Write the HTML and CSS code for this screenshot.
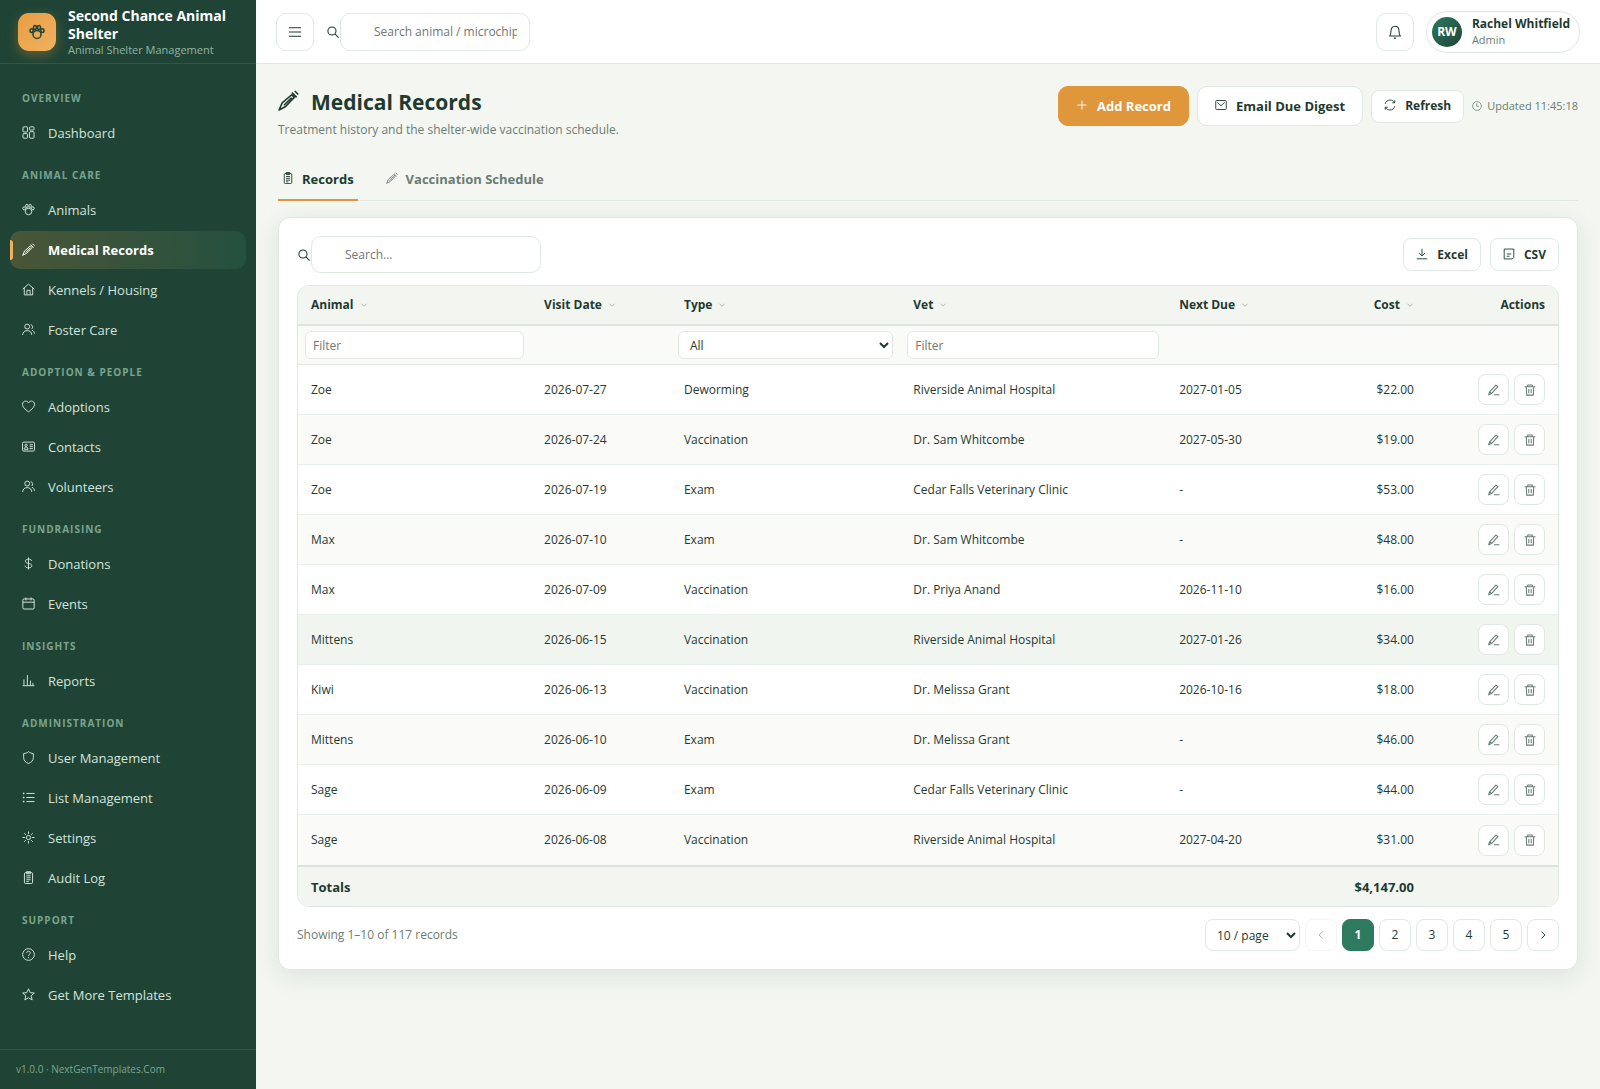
FILE: index.html
```html
<!DOCTYPE html>
<html lang="en">
<head>
    <meta charset="utf-8">
    <meta name="viewport" content="width=device-width, initial-scale=1">
    <title>Medical Records</title>
    <link rel="stylesheet" href="styles.css">
</head>
<body>

<!-- Icon sprite -->
<svg class="sprite" aria-hidden="true">
    <symbol id="i-paw" viewBox="0 0 16 16"><circle cx="8" cy="10.4" r="4"/><ellipse cx="2.6" cy="6.6" rx="1.6" ry="1.9"/><ellipse cx="6" cy="3.6" rx="1.5" ry="2"/><ellipse cx="10" cy="3.6" rx="1.5" ry="2"/><ellipse cx="13.4" cy="6.6" rx="1.6" ry="1.9"/></symbol>
    <symbol id="i-dashboard" viewBox="0 0 16 16"><rect x="1.2" y="1" width="5.6" height="6.4" rx="1"/><rect x="1.2" y="9.4" width="5.6" height="5.6" rx="1"/><rect x="9.2" y="1" width="5.6" height="4" rx="1"/><rect x="9.2" y="7" width="5.6" height="8" rx="1"/></symbol>
    <symbol id="i-syringe" viewBox="0 0 16 16"><path d="M.8 15.2l2.4-5.4L10.4 3.6l2 2-6.600 7zM4.600 11.600l5.800-5.800M10.600 2l3.600 3.600M12.800.8l2.600 2.600"/></symbol>
    <symbol id="i-home" viewBox="0 0 16 16"><path d="M.8 7.6L8 1.4l7.2 6.2M2.8 6v8.6h10.4V6M6 14.4V9h4v5.4"/></symbol>
    <symbol id="i-users" viewBox="0 0 16 16"><circle cx="6.4" cy="4.4" r="3"/><path d="M.8 14.6c.4-3.6 2.4-5.2 5.6-5.2s5.2 1.6 5.6 5.2M10.8 2a3 3 0 0 1 1 5.4M12.2 9c2 .4 3 2 3 4.4"/></symbol>
    <symbol id="i-heart" viewBox="0 0 16 16"><path d="M8 14.6C3.600 11.400.6 8.600.6 5.200.6 3 2.200 1.400 4.400 1.400 6 1.400 7.200 2.200 8 3.600c.8-1.400 2-2.200 3.600-2.200 2.200 0 3.800 1.600 3.800 3.800 0 3.400-3 6.200-7.400 9.400z"/></symbol>
    <symbol id="i-card" viewBox="0 0 16 16"><rect x=".6" y="2.6" width="14.8" height="11" rx="1.5"/><circle cx="5" cy="6.6" r="1.4"/><path d="M2.6 11.4c.2-2 1-2.6 2.4-2.6s2.2.6 2.4 2.6zM9.4 5.8h4M9.4 8.2h4M9.4 10.6h4"/></symbol>
    <symbol id="i-dollar" viewBox="0 0 16 16"><path d="M8 .6v14.8M12 4.8C11.6 3.2 10.2 2.6 8 2.6c-2.4 0-3.8 1-3.8 2.6 0 3.8 7.8 1.6 7.8 5.4 0 1.8-1.6 2.8-4 2.8s-4-1-4.2-2.8"/></symbol>
    <symbol id="i-calendar" viewBox="0 0 16 16"><rect x="1" y="2.4" width="14" height="12.4" rx="1.5"/><path d="M1 6.4h14M4.800.6v3.600M11.200.6v3.600"/></symbol>
    <symbol id="i-chart" viewBox="0 0 16 16"><path d="M.8 14.4h14.4M2.4 14V6.6M6.6 14V1.4M10.4 14V8M13.4 14v-3"/></symbol>
    <symbol id="i-shield" viewBox="0 0 16 16"><path d="M8 .8c1.8 1.6 3.8 2.2 6 2.4V8c0 3.6-2.4 6-6 7.4C4.4 14 2 11.6 2 8V3.2C4.2 3 6.2 2.4 8 .8z"/></symbol>
    <symbol id="i-list" viewBox="0 0 16 16"><path d="M5.4 3h10M5.4 8h10M5.4 13h10M1 3h2M1 8h2M1 13h2M2 2v2M2 7v2M2 12v2"/></symbol>
    <symbol id="i-gear" viewBox="0 0 16 16"><circle cx="8" cy="8" r="2.6"/><path d="M8 .6v3M8 12.4v3M.6 8h3M12.4 8h3M2.8 2.8l2 2M11.2 11.2l2 2M2.8 13.2l2-2M11.2 4.8l2-2"/></symbol>
    <symbol id="i-clipboard" viewBox="0 0 16 16"><rect x="3" y="2" width="10" height="13.4" rx="1.5"/><path d="M5.600.8h4.800v2.600H5.600zM5.400 6h5.200M5.400 8.400h5.200M5.400 10.800h5.200M5.400 13h3"/></symbol>
    <symbol id="i-help" viewBox="0 0 16 16"><circle cx="8" cy="8" r="7.2"/><path d="M5.8 6.2C5.8 4.8 6.6 4 8 4s2.3.8 2.3 2.1C10.3 7.8 8 7.8 8 9.6M8 11v1.4"/></symbol>
    <symbol id="i-star" viewBox="0 0 16 16"><path d="M8 1l2.1 4.7 5.1.5-3.9 3.4 1.2 5.1L8 12l-4.5 2.7 1.2-5.1L.8 6.2l5.1-.5z"/></symbol>
    <symbol id="i-menu" viewBox="0 0 16 16"><path d="M1 3.2h14M1 8h14M1 12.800h14"/></symbol>
    <symbol id="i-search" viewBox="0 0 16 16"><circle cx="6.6" cy="6.6" r="5.4"/><path d="M10.6 10.6l4.8 4.8"/></symbol>
    <symbol id="i-bell" viewBox="0 0 16 16"><path d="M1.8 12.6c1.2-1.2 1.6-2.4 1.6-5.6C3.4 3.8 5 1.4 8 1.4S12.6 3.8 12.6 7c0 3.2.4 4.4 1.6 5.6zM6.8 15h2.4"/></symbol>
    <symbol id="i-plus" viewBox="0 0 16 16"><path d="M8 2v12M2 8h12"/></symbol>
    <symbol id="i-mail" viewBox="0 0 16 16"><rect x="1" y="2" width="14" height="12" rx="1"/><path d="M3 4.6l5 4.4 5-4.4"/></symbol>
    <symbol id="i-refresh" viewBox="0 0 16 16"><path d="M1.6 6.6C2.2 3.4 4.8 1.4 8 1.4c2.6 0 4.8 1.2 6 3.4M14.4 1.6V5h-3.4M14.4 9.4c-.6 3.2-3.2 5.2-6.4 5.2-2.6 0-4.8-1.2-6-3.4M1.6 14.4V11H5"/></symbol>
    <symbol id="i-clock" viewBox="0 0 16 16"><circle cx="8" cy="8" r="7"/><path d="M7.6 3.6v4.8h3.6"/></symbol>
    <symbol id="i-download" viewBox="0 0 16 16"><path d="M8 1v9.4M4 6.8l4 3.8 4-3.8M1 14.4h14"/></symbol>
    <symbol id="i-file" viewBox="0 0 16 16"><path d="M1.600 1.400h12.800v11.200l-2 2H1.600zM5 8h6M5 11h3.600"/></symbol>
    <symbol id="i-sort" viewBox="0 0 16 16"><path d="M3 5.5l5 5 5-5"/></symbol>
    <symbol id="i-edit" viewBox="0 0 16 16"><path d="M.8 14.400l1.200-4L10.600 1.400l2.600 2.200-8.600 9.200zM2.400 10.600l2.200 2M8 14.400h7.200"/></symbol>
    <symbol id="i-trash" viewBox="0 0 16 16"><path d="M.8 3.6h14.4M5 3.4V1.2h6v2.2M3 3.8l.6 11h8.800l.6-11M6.400 6.600v5.600M9.600 6.600v5.600"/></symbol>
    <symbol id="i-prev" viewBox="0 0 16 16"><path d="M10.5 2.5L5 8l5.5 5.5"/></symbol>
    <symbol id="i-next" viewBox="0 0 16 16"><path d="M5.5 2.5L11 8l-5.5 5.5"/></symbol>
</svg>

<div class="app">

    <!-- Sidebar -->
    <aside class="sidebar">
        <div class="brand">
            <div class="brand-logo"><svg class="icon"><use href="#i-paw"/></svg></div>
            <div class="brand-text">
                <div class="brand-name">Second Chance Animal Shelter</div>
                <div class="brand-sub">Animal Shelter Management</div>
            </div>
        </div>

        <nav class="nav">
            <div class="nav-label">Overview</div>
            <a href="#" class="nav-link"><svg class="icon"><use href="#i-dashboard"/></svg>Dashboard</a>

            <div class="nav-label">Animal Care</div>
            <a href="#" class="nav-link"><svg class="icon"><use href="#i-paw"/></svg>Animals</a>
            <a href="#" class="nav-link active"><svg class="icon"><use href="#i-syringe"/></svg>Medical Records</a>
            <a href="#" class="nav-link"><svg class="icon"><use href="#i-home"/></svg>Kennels / Housing</a>
            <a href="#" class="nav-link"><svg class="icon"><use href="#i-users"/></svg>Foster Care</a>

            <div class="nav-label">Adoption &amp; People</div>
            <a href="#" class="nav-link"><svg class="icon"><use href="#i-heart"/></svg>Adoptions</a>
            <a href="#" class="nav-link"><svg class="icon"><use href="#i-card"/></svg>Contacts</a>
            <a href="#" class="nav-link"><svg class="icon"><use href="#i-users"/></svg>Volunteers</a>

            <div class="nav-label">Fundraising</div>
            <a href="#" class="nav-link"><svg class="icon"><use href="#i-dollar"/></svg>Donations</a>
            <a href="#" class="nav-link"><svg class="icon"><use href="#i-calendar"/></svg>Events</a>

            <div class="nav-label">Insights</div>
            <a href="#" class="nav-link"><svg class="icon"><use href="#i-chart"/></svg>Reports</a>

            <div class="nav-label">Administration</div>
            <a href="#" class="nav-link"><svg class="icon"><use href="#i-shield"/></svg>User Management</a>
            <a href="#" class="nav-link"><svg class="icon"><use href="#i-list"/></svg>List Management</a>
            <a href="#" class="nav-link"><svg class="icon"><use href="#i-gear"/></svg>Settings</a>
            <a href="#" class="nav-link"><svg class="icon"><use href="#i-clipboard"/></svg>Audit Log</a>

            <div class="nav-label">Support</div>
            <a href="#" class="nav-link"><svg class="icon"><use href="#i-help"/></svg>Help</a>
            <a href="#" class="nav-link"><svg class="icon"><use href="#i-star"/></svg>Get More Templates</a>
        </nav>

        <div class="sidebar-footer">v1.0.0 · NextGenTemplates.Com</div>
    </aside>

    <div class="main">

        <!-- Topbar -->
        <header class="topbar">
            <button type="button" class="icon-btn" aria-label="Toggle menu"><svg class="icon"><use href="#i-menu"/></svg></button>
            <div class="search top-search">
                <label for="globalSearch"><svg class="icon"><use href="#i-search"/></svg></label>
                <input type="text" id="globalSearch" aria-label="Search" placeholder="Search animal / microchip">
            </div>
            <div class="topbar-right">
                <button type="button" class="icon-btn" aria-label="Notifications"><svg class="icon"><use href="#i-bell"/></svg></button>
                <button type="button" class="user">
                    <span class="avatar">RW</span>
                    <span class="user-text">
                        <span class="user-name">Rachel Whitfield</span>
                        <span class="user-role">Admin</span>
                    </span>
                </button>
            </div>
        </header>

        <main class="content">
            <div class="page-head">
                <div>
                    <h1><svg class="icon"><use href="#i-syringe"/></svg>Medical Records</h1>
                    <p>Treatment history and the shelter-wide vaccination schedule.</p>
                </div>
                <div class="page-actions">
                    <button type="button" class="btn btn-accent"><svg class="icon"><use href="#i-plus"/></svg>Add Record</button>
                    <button type="button" class="btn"><svg class="icon"><use href="#i-mail"/></svg>Email Due Digest</button>
                    <button type="button" class="btn btn-sm"><svg class="icon"><use href="#i-refresh"/></svg>Refresh</button>
                    <span class="updated"><svg class="icon"><use href="#i-clock"/></svg>Updated 11:45:18</span>
                </div>
            </div>

            <div class="tabs">
                <button type="button" class="tab active"><svg class="icon"><use href="#i-clipboard"/></svg>Records</button>
                <button type="button" class="tab"><svg class="icon"><use href="#i-syringe"/></svg>Vaccination Schedule</button>
            </div>

            <section class="card">
                <div class="toolbar">
                    <div class="search table-search">
                        <label for="tableSearch"><svg class="icon"><use href="#i-search"/></svg></label>
                        <input type="text" id="tableSearch" aria-label="Search records" placeholder="Search...">
                    </div>
                    <div class="toolbar-right">
                        <button type="button" class="btn btn-sm"><svg class="icon"><use href="#i-download"/></svg>Excel</button>
                        <button type="button" class="btn btn-sm"><svg class="icon"><use href="#i-file"/></svg>CSV</button>
                    </div>
                </div>

                <div class="table-wrap">
                    <table>
                        <colgroup>
                            <col class="c-animal"><col class="c-date"><col class="c-type"><col class="c-vet"><col class="c-due"><col class="c-cost"><col class="c-actions">
                        </colgroup>
                        <thead>
                            <tr>
                                <th>Animal<svg class="icon"><use href="#i-sort"/></svg></th>
                                <th>Visit Date<svg class="icon"><use href="#i-sort"/></svg></th>
                                <th>Type<svg class="icon"><use href="#i-sort"/></svg></th>
                                <th>Vet<svg class="icon"><use href="#i-sort"/></svg></th>
                                <th>Next Due<svg class="icon"><use href="#i-sort"/></svg></th>
                                <th class="right">Cost<svg class="icon"><use href="#i-sort"/></svg></th>
                                <th class="right">Actions</th>
                            </tr>
                            <tr class="filters">
                                <td><input type="text" aria-label="Filter animal" placeholder="Filter"></td>
                                <td></td>
                                <td><select aria-label="Filter type"><option>All</option><option>Deworming</option><option>Exam</option><option>Vaccination</option></select></td>
                                <td><input type="text" aria-label="Filter vet" placeholder="Filter"></td>
                                <td></td>
                                <td></td>
                                <td></td>
                            </tr>
                        </thead>
                        <tbody>
                            <tr>
                                <td>Zoe</td><td>2026-07-27</td><td>Deworming</td><td>Riverside Animal Hospital</td><td>2027-01-05</td><td class="right">$22.00</td>
                                <td><div class="row-actions"><button type="button" aria-label="Edit"><svg class="icon"><use href="#i-edit"/></svg></button><button type="button" aria-label="Delete"><svg class="icon"><use href="#i-trash"/></svg></button></div></td>
                            </tr>
                            <tr>
                                <td>Zoe</td><td>2026-07-24</td><td>Vaccination</td><td>Dr. Sam Whitcombe</td><td>2027-05-30</td><td class="right">$19.00</td>
                                <td><div class="row-actions"><button type="button" aria-label="Edit"><svg class="icon"><use href="#i-edit"/></svg></button><button type="button" aria-label="Delete"><svg class="icon"><use href="#i-trash"/></svg></button></div></td>
                            </tr>
                            <tr>
                                <td>Zoe</td><td>2026-07-19</td><td>Exam</td><td>Cedar Falls Veterinary Clinic</td><td>-</td><td class="right">$53.00</td>
                                <td><div class="row-actions"><button type="button" aria-label="Edit"><svg class="icon"><use href="#i-edit"/></svg></button><button type="button" aria-label="Delete"><svg class="icon"><use href="#i-trash"/></svg></button></div></td>
                            </tr>
                            <tr>
                                <td>Max</td><td>2026-07-10</td><td>Exam</td><td>Dr. Sam Whitcombe</td><td>-</td><td class="right">$48.00</td>
                                <td><div class="row-actions"><button type="button" aria-label="Edit"><svg class="icon"><use href="#i-edit"/></svg></button><button type="button" aria-label="Delete"><svg class="icon"><use href="#i-trash"/></svg></button></div></td>
                            </tr>
                            <tr>
                                <td>Max</td><td>2026-07-09</td><td>Vaccination</td><td>Dr. Priya Anand</td><td>2026-11-10</td><td class="right">$16.00</td>
                                <td><div class="row-actions"><button type="button" aria-label="Edit"><svg class="icon"><use href="#i-edit"/></svg></button><button type="button" aria-label="Delete"><svg class="icon"><use href="#i-trash"/></svg></button></div></td>
                            </tr>
                            <tr class="hovered">
                                <td>Mittens</td><td>2026-06-15</td><td>Vaccination</td><td>Riverside Animal Hospital</td><td>2027-01-26</td><td class="right">$34.00</td>
                                <td><div class="row-actions"><button type="button" aria-label="Edit"><svg class="icon"><use href="#i-edit"/></svg></button><button type="button" aria-label="Delete"><svg class="icon"><use href="#i-trash"/></svg></button></div></td>
                            </tr>
                            <tr>
                                <td>Kiwi</td><td>2026-06-13</td><td>Vaccination</td><td>Dr. Melissa Grant</td><td>2026-10-16</td><td class="right">$18.00</td>
                                <td><div class="row-actions"><button type="button" aria-label="Edit"><svg class="icon"><use href="#i-edit"/></svg></button><button type="button" aria-label="Delete"><svg class="icon"><use href="#i-trash"/></svg></button></div></td>
                            </tr>
                            <tr>
                                <td>Mittens</td><td>2026-06-10</td><td>Exam</td><td>Dr. Melissa Grant</td><td>-</td><td class="right">$46.00</td>
                                <td><div class="row-actions"><button type="button" aria-label="Edit"><svg class="icon"><use href="#i-edit"/></svg></button><button type="button" aria-label="Delete"><svg class="icon"><use href="#i-trash"/></svg></button></div></td>
                            </tr>
                            <tr>
                                <td>Sage</td><td>2026-06-09</td><td>Exam</td><td>Cedar Falls Veterinary Clinic</td><td>-</td><td class="right">$44.00</td>
                                <td><div class="row-actions"><button type="button" aria-label="Edit"><svg class="icon"><use href="#i-edit"/></svg></button><button type="button" aria-label="Delete"><svg class="icon"><use href="#i-trash"/></svg></button></div></td>
                            </tr>
                            <tr>
                                <td>Sage</td><td>2026-06-08</td><td>Vaccination</td><td>Riverside Animal Hospital</td><td>2027-04-20</td><td class="right">$31.00</td>
                                <td><div class="row-actions"><button type="button" aria-label="Edit"><svg class="icon"><use href="#i-edit"/></svg></button><button type="button" aria-label="Delete"><svg class="icon"><use href="#i-trash"/></svg></button></div></td>
                            </tr>
                        </tbody>
                        <tfoot>
                            <tr>
                                <td>Totals</td><td></td><td></td><td></td><td></td><td class="right">$4,147.00</td><td></td>
                            </tr>
                        </tfoot>
                    </table>
                </div>

                <div class="table-foot">
                    <div class="showing">Showing 1–10 of 117 records</div>
                    <div class="pager">
                        <select aria-label="Rows per page"><option>10 / page</option><option>25 / page</option><option>50 / page</option></select>
                        <button type="button" disabled aria-label="Previous page"><svg class="icon"><use href="#i-prev"/></svg></button>
                        <button type="button" class="current">1</button>
                        <button type="button">2</button>
                        <button type="button">3</button>
                        <button type="button">4</button>
                        <button type="button">5</button>
                        <button type="button" aria-label="Next page"><svg class="icon"><use href="#i-next"/></svg></button>
                    </div>
                </div>
            </section>
        </main>
    </div>
</div>

</body>
</html>
```
FILE: styles.css
```css
:root {
    --green-dark: #1f4436;
    --green: #2d7a5f;
    --accent: #e0963b;
    --bg: #f3f6f1;
    --text: #1f3a30;
    --muted: #6b7c74;
    --border: #dfe8e3;
}

* {
    box-sizing: border-box;
}

body {
    margin: 0;
    font-family: "Open Sans", "Noto Sans", sans-serif;
    font-size: 13px;
    line-height: 20px;
    color: var(--text);
    background: var(--bg);
}

button, input, select {
    font: inherit;
    color: inherit;
}

button {
    cursor: pointer;
}

.sprite {
    display: none;
}

.icon {
    width: 14px;
    height: 14px;
    flex: none;
    fill: none;
    stroke: currentColor;
    stroke-width: 1.2;
    stroke-linejoin: round;
}

.app {
    display: flex;
    min-height: 100vh;
}

/* Sidebar */
.sidebar {
    width: 256px;
    flex: none;
    display: flex;
    flex-direction: column;
    background: var(--green-dark);
    color: #d3e3da;
}

.brand {
    height: 64px;
    display: flex;
    align-items: center;
    gap: 12px;
    padding: 0 18px;
    border-bottom: 1px solid #315646;
}

.brand-logo {
    width: 38px;
    height: 38px;
    flex: none;
    display: flex;
    align-items: center;
    justify-content: center;
    border-radius: 11px;
    background: linear-gradient(135deg, #e89d42, #f0b260);
    box-shadow: 0 4px 12px rgba(224, 150, 59, 0.35);
    color: var(--green-dark);
}

.brand-logo .icon {
    width: 16px;
    height: 16px;
    stroke-width: 1.5;
}

.brand-name {
    font-size: 14px;
    font-weight: 700;
    line-height: 18px;
    color: #fff;
}

.brand-sub {
    font-size: 11px;
    line-height: 14px;
    color: #8fb5a1;
}

.nav {
    flex: 1;
    padding: 13px 10px;
}

.nav-label {
    padding: 14px 12px 8px;
    font-size: 10px;
    font-weight: 700;
    line-height: 15px;
    letter-spacing: 1px;
    text-transform: uppercase;
    color: #7ba48e;
}

.nav-link {
    position: relative;
    height: 38px;
    display: flex;
    align-items: center;
    gap: 13px;
    margin-bottom: 2px;
    padding: 0 12px;
    border-radius: 10px;
    color: #d3e3da;
    text-decoration: none;
}

.nav-link .icon {
    width: 13px;
    height: 13px;
    margin-bottom: 2px;
}

.nav-link.active {
    background: linear-gradient(90deg, #4a5637, #24503f);
    font-weight: 700;
    color: #fff;
}

.nav-link.active::before {
    content: "";
    position: absolute;
    left: 0;
    top: 9px;
    bottom: 9px;
    width: 3px;
    border-radius: 0 3px 3px 0;
    background: #f0b260;
}

.sidebar-footer {
    padding: 10px 16px;
    border-top: 1px solid #315646;
    font-size: 10px;
    line-height: 19px;
    color: #7ba48e;
}

/* Topbar */
.main {
    flex: 1;
    min-width: 0;
}

.topbar {
    height: 64px;
    display: flex;
    align-items: center;
    gap: 13px;
    padding: 0 20px;
    background: #fff;
    border-bottom: 1px solid var(--border);
}

.icon-btn {
    width: 38px;
    height: 38px;
    display: flex;
    align-items: center;
    justify-content: center;
    padding: 0;
    background: #fff;
    border: 1px solid var(--border);
    border-radius: 10px;
}

.search {
    display: flex;
    align-items: center;
}

.search label {
    display: flex;
}

.search label .icon {
    width: 12px;
    height: 12px;
    margin: 0 1px 0 0;
    stroke-width: 1.4;
}

.search input {
    height: 37px;
    padding: 0 12px 0 33px;
    background: #fff;
    border: 1px solid var(--border);
    border-radius: 10px;
    font-size: 12px;
}

.top-search input {
    width: 190px;
    height: 38px;
}

.table-search label {
    padding-left: 1px;
}

.table-search input {
    width: 230px;
}

.search input::placeholder, .filters input::placeholder {
    color: #757575;
}

.topbar-right {
    display: flex;
    align-items: center;
    gap: 12px;
    margin-left: auto;
}

.user {
    height: 42px;
    display: flex;
    align-items: center;
    gap: 10px;
    padding: 0 9px 0 5px;
    background: #fff;
    border: 1px solid var(--border);
    border-radius: 21px;
    text-align: left;
}

.avatar {
    width: 30px;
    height: 30px;
    border-radius: 50%;
    background: linear-gradient(135deg, var(--green), var(--green-dark));
    font-size: 12px;
    font-weight: 700;
    line-height: 30px;
    text-align: center;
    color: #fff;
}

.user-name, .user-role {
    display: block;
    line-height: 16px;
}

.user-name {
    font-size: 12px;
    font-weight: 700;
}

.user-role {
    font-size: 11px;
    color: var(--muted);
}

/* Page head */
.content {
    padding: 22px;
}

.page-head {
    display: flex;
    justify-content: space-between;
    align-items: flex-start;
}

h1 {
    display: flex;
    align-items: center;
    gap: 12px;
    margin: 0;
    font-size: 21px;
    font-weight: 700;
    line-height: 32px;
}

h1 .icon {
    width: 21px;
    height: 21px;
    margin-bottom: 4px;
}

.page-head p {
    margin: 2px 0 0;
    font-size: 12px;
    color: var(--muted);
}

.page-actions {
    display: flex;
    align-items: center;
    gap: 8px;
}

.btn {
    height: 40px;
    display: flex;
    align-items: center;
    gap: 9px;
    padding: 0 17px;
    background: #fff;
    border: 1px solid var(--border);
    border-radius: 10px;
    font-weight: 700;
}

.btn .icon, .tab .icon {
    width: 12px;
    height: 12px;
    margin-bottom: 2px;
}

.btn-accent {
    background: var(--accent);
    border-color: var(--accent);
    color: #fff;
}

.btn-sm {
    height: 33px;
    padding: 0 12px;
    border-radius: 8px;
    font-size: 12px;
}

.updated {
    display: flex;
    align-items: center;
    gap: 5px;
    font-size: 11px;
    color: var(--muted);
}

.updated .icon {
    width: 10px;
    height: 10px;
}

.tabs {
    display: flex;
    gap: 24px;
    margin: 20px 0 16px;
    border-bottom: 1px solid var(--border);
}

.tab {
    height: 41px;
    display: flex;
    align-items: center;
    gap: 8px;
    margin-bottom: -1px;
    padding: 0 4px 2px;
    background: none;
    border: 0;
    border-bottom: 2px solid transparent;
    font-weight: 700;
    color: var(--muted);
}

.tab.active {
    border-bottom-color: var(--accent);
    color: var(--text);
}

/* Card and table */
.card {
    padding: 18px;
    background: #fff;
    border: 1px solid var(--border);
    border-radius: 12px;
    box-shadow: 0 6px 24px rgba(31, 68, 54, 0.1);
}

.toolbar {
    display: flex;
    justify-content: space-between;
    align-items: center;
    margin-bottom: 12px;
}

.toolbar-right {
    display: flex;
    gap: 9px;
}

.table-wrap {
    overflow: hidden;
    border: 1px solid var(--border);
    border-radius: 12px;
}

table {
    width: 100%;
    table-layout: fixed;
    border-collapse: separate;
    border-spacing: 0;
}

.c-animal { width: 18.5%; }
.c-date { width: 11.1%; }
.c-type { width: 18.2%; }
.c-vet { width: 21.1%; }
.c-due { width: 10.3%; }
.c-cost { width: 10.4%; }
.c-actions { width: 10.4%; }

th {
    height: 40px;
    padding: 0 13px;
    background: #f2f5f0;
    border-bottom: 2px solid #d8e4dd;
    font-size: 12px;
    font-weight: 700;
    text-align: left;
}

th .icon {
    width: 8px;
    height: 8px;
    margin-left: 6px;
    stroke-width: 1.5;
    color: #9aa8a0;
}

.right {
    text-align: right;
}

.filters td {
    height: 39px;
    padding: 0 7px;
    background: #fafbf9;
    border-bottom: 1px solid var(--border);
}

.filters input, .filters select {
    display: block;
    width: 100%;
    height: 28px;
    padding: 0 7px;
    background: #fff;
    border: 1px solid var(--border);
    border-radius: 6px;
    font-size: 12px;
}

tbody td {
    height: 50px;
    padding: 0 13px;
    border-bottom: 1px solid #e9efeb;
    font-size: 12px;
}

tbody tr:nth-child(even) td {
    background: #fafbf8;
}

tbody tr.hovered td, tbody tr:hover td {
    background: #f1f5f0;
}

tbody tr:last-child td {
    border-bottom: 0;
}

.row-actions {
    display: flex;
    justify-content: flex-end;
    gap: 5px;
}

.row-actions button {
    width: 31px;
    height: 31px;
    display: flex;
    align-items: center;
    justify-content: center;
    padding: 0;
    background: #fff;
    border: 1px solid var(--border);
    border-radius: 8px;
    color: var(--muted);
}

.row-actions .icon {
    width: 12px;
    height: 12px;
    stroke-width: 1.4;
}

tfoot td {
    height: 41px;
    padding: 0 13px;
    background: #f2f5f0;
    border-top: 2px solid #d8e4dd;
    font-size: 13px;
    font-weight: 700;
}

.table-foot {
    display: flex;
    justify-content: space-between;
    align-items: center;
    margin-top: 12px;
}

.showing {
    font-size: 12px;
    color: var(--muted);
}

.pager {
    display: flex;
    gap: 5px;
}

.pager select, .pager button {
    height: 32px;
    background: #fff;
    border: 1px solid var(--border);
    border-radius: 8px;
    font-size: 12px;
}

.pager select {
    width: 95px;
    padding: 0 7px;
}

.pager button {
    width: 32px;
    display: flex;
    align-items: center;
    justify-content: center;
    padding: 0;
}

.pager .icon {
    width: 10px;
    height: 10px;
    stroke-width: 1.6;
}

.pager button.current {
    background: var(--green);
    border-color: var(--green);
    font-weight: 700;
    color: #fff;
}

.pager button:disabled {
    opacity: 0.4;
}
```
